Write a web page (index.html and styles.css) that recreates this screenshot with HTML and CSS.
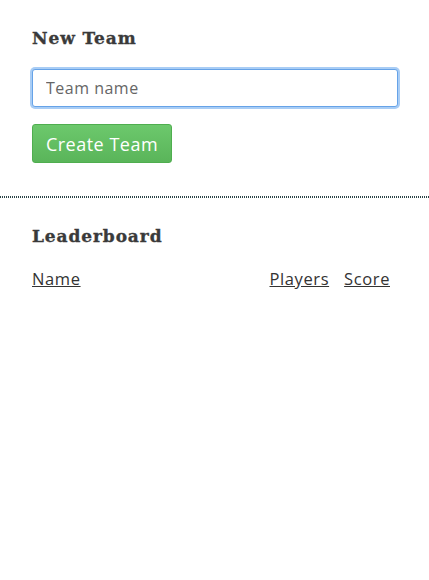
FILE: index.html
```html
<!DOCTYPE html>
<html>
<head>
<meta charset="utf-8">
<link rel="stylesheet" href="styles.css">
</head>
<body>
<section class="panel new-team">
  <h2 class="heading">New Team</h2>
  <input class="team-input" type="text" placeholder="Team name">
  <button class="btn-create">Create Team</button>
</section>
<div class="divider"></div>
<section class="panel board">
  <h2 class="heading">Leaderboard</h2>
  <div class="board-head">
    <a class="col col-name">Name</a>
    <a class="col">Players</a>
    <a class="col">Score</a>
  </div>
</section>
</body>
</html>
```

FILE: styles.css
```css
html, body {
  margin: 0;
  padding: 0;
  background: #fff;
}
body {
  font-family: "Open Sans", "DejaVu Sans", sans-serif;
  color: #333;
}
.panel {
  padding: 0 31px 0 32px;
  display: flex;
  flex-direction: column;
  align-items: flex-start;
}
.new-team {
  padding-top: 27px;
  padding-bottom: 33px;
}
.divider {
  height: 2px;
  background: repeating-linear-gradient(90deg, #2c4447 0 1px, transparent 1px 2px);
}
.board {
  padding-top: 27px;
}
.heading {
  margin: 0;
  font-family: "DejaVu Serif", serif;
  font-weight: bold;
  font-size: 17px;
  letter-spacing: 0.9px;
  line-height: 22px;
  color: #3a3a3a;
  -webkit-text-stroke: 0.35px #3a3a3a;
}
.team-input {
  margin-top: 20px;
  box-sizing: border-box;
  width: 366px;
  height: 38px;
  border: 1px solid #66a3e8;
  border-radius: 3px;
  box-shadow: 0 0 0 2px #a9cdf5;
  padding: 0 13px;
  font-family: inherit;
  font-size: 16px;
  letter-spacing: 0.5px;
  color: #555;
  outline: none;
}
.team-input::placeholder {
  color: #666;
}
.btn-create {
  margin-top: 17px;
  box-sizing: border-box;
  width: 140px;
  height: 39px;
  border: 1px solid #4fae4f;
  border-radius: 3px;
  background: linear-gradient(#6cc86c, #5ab55a);
  color: #fff;
  font-family: inherit;
  font-size: 18px;
  letter-spacing: 0.5px;
  padding: 0;
}
.board-head {
  margin-top: 21px;
  width: 358px;
  display: grid;
  grid-template-columns: 1fr auto auto;
  column-gap: 15px;
}
.col {
  color: #333;
  text-decoration: underline;
  font-size: 16.5px;
  letter-spacing: 0.6px;
  line-height: 22px;
}
```
